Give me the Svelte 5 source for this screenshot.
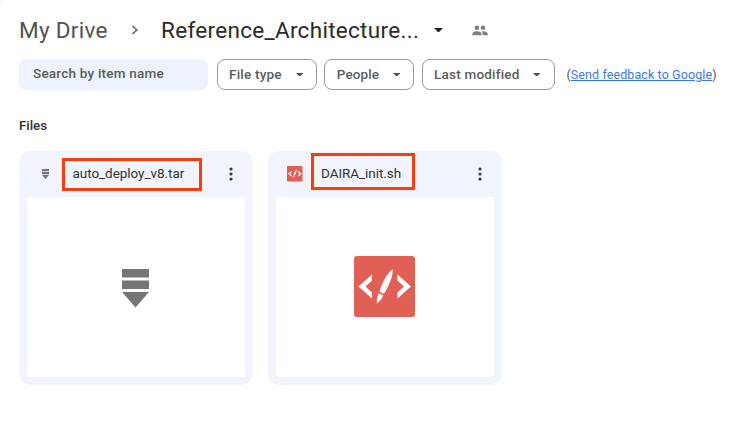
<script>
  const filters = [
    { label: 'File type', width: 100.5, spacing: 0.22 },
    { label: 'People', width: 90, spacing: 0.1 },
    { label: 'Last modified', width: 133, spacing: 0.2 }
  ];
  const files = [
    { name: 'auto_deploy_v8.tar', kind: 'archive' },
    { name: 'DAIRA_init.sh', kind: 'script' }
  ];
</script>

{#snippet caret(w)}
  <svg class="caret" width={w} height={w / 2} viewBox="0 0 10 5"><path d="M0 0h10L5 5z" /></svg>
{/snippet}

{#snippet archiveIcon(w)}
  <svg width={w} height={w * 1.43} viewBox="0 0 27 38.6" fill="#757575">
    <path d="M0 0h27v8.5H0zM0 11.5h27V20H0zM0 23h27L13.5 38.6z" />
  </svg>
{/snippet}

{#snippet scriptIcon(w)}
  <svg width={w} height={w} viewBox="0 0 61 61">
    <rect width="61" height="61" rx="3" fill="#e06055" />
    <path fill="#fff" d="M18 18.5L4.5 30.5 18 42.5v-6l-6.500-6 6.500-6zM43.500 18.500l13.500 12-13.500 12v-6l6.500-6-6.500-6z" />
    <path fill="#fff" d="M38.700 13.300c.5 6-3.200 16-8.700 24.400l-4.500-2C28.200 26.300 33 17.500 38.700 13.300zM24.800 37.300l4.300 2c-1.200 3.700-3.200 6.200-6.200 8.200-.4-3.600.2-6.900 1.900-10.200z" />
  </svg>
{/snippet}

<main>
  <nav>
    <span class="root">My Drive</span>
    <svg class="chevron" width="8" height="12" viewBox="0 0 8 12"><path d="M1.500 2L5.800 6 1.500 10" /></svg>
    <span class="folder">Reference_Architecture...</span>
    {@render caret(9)}
    <svg class="people" width="16" height="11" viewBox="0 0 16 11">
      <g fill="#808080"><circle cx="4.900" cy="2.700" r="2.300" /><circle cx="11" cy="2.700" r="2.300" />
      <path d="M.3 10.300V8.700C.3 7 3 6.200 4.900 6.200S9.600 7 9.600 8.700v1.600zM10.700 10.300V8.700c0-1-.5-1.700-1.300-2.300 2.500-.7 6.300.2 6.300 2.300v1.600z" /></g>
    </svg>
  </nav>

  <div class="filters">
    <div class="search">Search by item name</div>
    {#each filters as f}
      <div class="chip" style="width: {f.width}px; letter-spacing: {f.spacing}px">
        <span>{f.label}</span>{@render caret(7.5)}
      </div>
    {/each}
    <div class="feedback">(<span class="link">Send feedback to Google</span>)</div>
  </div>

  <h2>Files</h2>

  <div class="grid">
    {#each files as file}
      <article>
        <header class={file.kind}>
          <span class="type">
            {#if file.kind === 'archive'}{@render archiveIcon(7)}{:else}{@render scriptIcon(15.5)}{/if}
          </span>
          <span class="name">{file.name}</span>
          <svg class="more" width="4" height="14" viewBox="0 0 4 14"><circle cx="2" cy="2" r="1.600" /><circle cx="2" cy="7" r="1.600" /><circle cx="2" cy="12" r="1.600" /></svg>
        </header>
        <div class="preview {file.kind}">
          {#if file.kind === 'archive'}{@render archiveIcon(27)}{:else}{@render scriptIcon(61)}{/if}
        </div>
      </article>
    {/each}
  </div>
</main>

<style>
  main {
    box-sizing: border-box;
    width: 741px;
    height: 436px;
    padding: 14px 19px 0;
    background: radial-gradient(circle at 8px 8px, #fff 7px, #f7f9fd 9px) 0 0 / 8px 8px no-repeat #fff;
    font-family: Roboto, sans-serif;
    color: #505352;
    white-space: nowrap;
    overflow: hidden;
  }
  svg { display: block; flex: none; }
  nav { display: flex; align-items: center; height: 32px; font-size: 22.5px; }
  .root { width: 112px; letter-spacing: 0.3px; }
  .chevron { fill: none; stroke: #666; stroke-width: 1.600; margin-right: 22px; }
  .folder { width: 272.500px; color: #2a2a2a; letter-spacing: 0.3px; }
  .caret { fill: #505352; }
  nav .caret { fill: #1f1f1f; }
  .people { margin-left: 29px; }
  .filters { display: flex; align-items: center; height: 31px; margin-top: 13px; font-size: 13.500px; font-weight: 500; }
  .search, .chip { color: #5a5d5c; }
  .search {
    box-sizing: border-box;
    width: 188.500px;
    height: 30.500px;
    line-height: 29px;
    margin-right: 9px;
    padding-left: 14px;
    border-radius: 7px;
    background: #edf2fc;
    letter-spacing: 0.22px;
  }
  .chip {
    box-sizing: border-box;
    display: flex;
    align-items: center;
    justify-content: space-between;
    height: 30.500px;
    margin-right: 7.300px;
    padding: 0 13px 0 11.500px;
    border: 1px solid #999c9b;
    border-radius: 8px;
  }
  .chip span { position: relative; top: -1px; }
  .feedback { margin: -1px 0 0 4.500px; font-size: 12.500px; font-weight: 400; letter-spacing: 0.1px; }
  .link { color: #3a78e4; text-decoration: underline; }
  h2 { margin: 28px 0 0; height: 16px; line-height: 16px; font-size: 13.300px; font-weight: 500; color: #333; }
  .grid { display: flex; gap: 15.500px; margin-top: 17px; }
  article {
    box-sizing: border-box;
    width: 233.500px;
    height: 233.500px;
    padding: 0 8px 8px;
    border-radius: 11px;
    background: #f1f4fc;
  }
  header { display: flex; align-items: center; height: 46px; }
  .type { display: flex; justify-content: center; width: 35px; flex: none; }
  header.archive .type { padding-left: 2px; width: 32.500px; }
  header.script .type :global(svg) { margin-left: 3px; }
  .name {
    box-sizing: border-box;
    height: 33px;
    line-height: 25px;
    width: 140.500px;
    padding-left: 8px;
    border: 3px solid #fa3c0c;
    font-size: 13.500px;
    letter-spacing: -0.05px;
    color: #333;
  }
  header.script .name { width: 104px; height: 37.500px; padding-left: 7px; line-height: 34px; margin-top: -5px; }
  .more { margin-left: auto; margin-right: 11.500px; fill: #3a3a3a; }
  .preview { display: flex; align-items: center; justify-content: center; height: 179.500px; border-radius: 3px; background: #fff; }
  .preview.archive { box-sizing: border-box; padding-top: 3px; }
</style>
